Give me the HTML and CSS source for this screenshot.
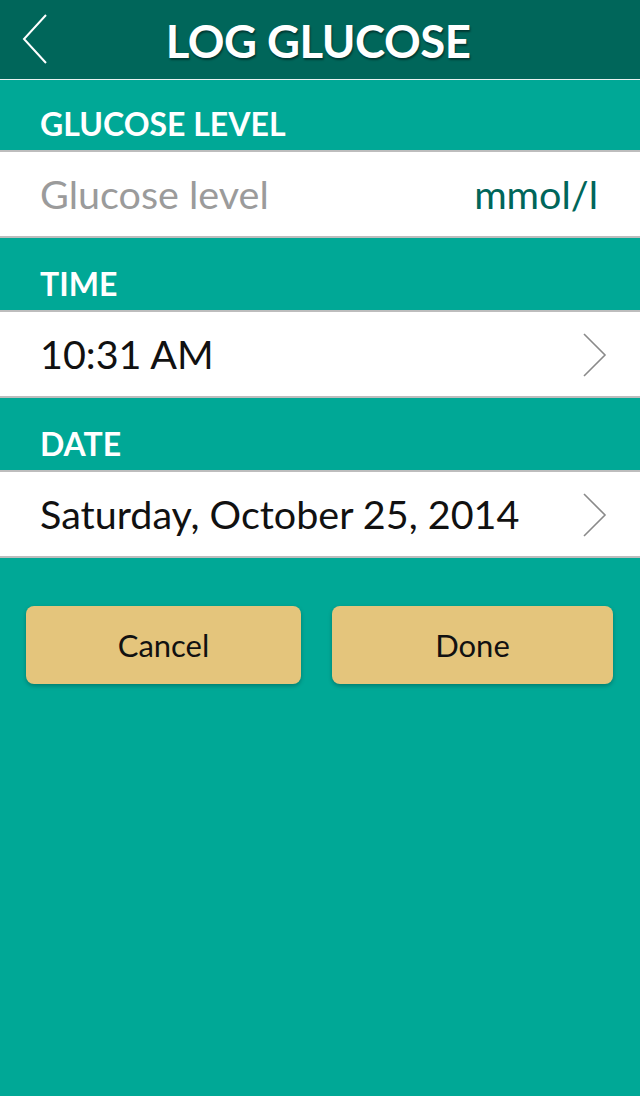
FILE: index.html
```html
<!DOCTYPE html>
<html>
<head>
<meta charset="utf-8">
<link rel="stylesheet" href="styles.css">
</head>
<body>
<div class="app">
  <header class="topbar">
    <svg class="back" width="30" height="52" viewBox="0 0 30 52"><polyline points="26,2 4,26 26,50" fill="none" stroke="#fff" stroke-width="2"/></svg>
    <h1 class="title">LOG GLUCOSE</h1>
  </header>
  <div class="section-head first">GLUCOSE LEVEL</div>
  <div class="row">
    <span class="placeholder">Glucose level</span>
    <span class="unit">mmol/l</span>
  </div>
  <div class="section-head">TIME</div>
  <div class="row">
    <span class="value">10:31 AM</span>
    <svg class="chev" width="26" height="44" viewBox="0 0 26 44"><polyline points="2,1 23,22 2,43" fill="none" stroke="#8a8a8a" stroke-width="1.6"/></svg>
  </div>
  <div class="section-head">DATE</div>
  <div class="row">
    <span class="value">Saturday, October 25, 2014</span>
    <svg class="chev" width="26" height="44" viewBox="0 0 26 44"><polyline points="2,1 23,22 2,43" fill="none" stroke="#8a8a8a" stroke-width="1.6"/></svg>
  </div>
  <div class="actions">
    <button class="btn btn-cancel">Cancel</button>
    <button class="btn btn-done">Done</button>
  </div>
</div>
</body>
</html>
```
FILE: styles.css
```css
html, body {
  margin: 0;
  padding: 0;
  background: #00a896;
}
body {
  font-family: Lato, "Open Sans", sans-serif;
}
.app {
  width: 640px;
  height: 1096px;
  background: #00a896;
}
.topbar {
  height: 79px;
  background: #00665a;
  border-bottom: 1px solid #e8f3f1;
  position: relative;
  display: flex;
  align-items: center;
  justify-content: center;
}
.back {
  position: absolute;
  left: 20px;
  top: 13px;
}
.title {
  margin: 0;
  color: #fff;
  font-size: 45.5px;
  font-weight: 700;
  letter-spacing: -0.5px;
  text-shadow: 1px 2px 2px rgba(0,0,0,0.45);
  padding-right: 4px;
  padding-top: 2px;
}
.section-head {
  height: 74px;
  box-sizing: border-box;
  padding: 26px 40px 0;
  color: #fff;
  font-weight: 700;
  font-size: 32px;
  line-height: 40px;
  border-bottom: 2px solid #bdbdbd;
}
.section-head.first {
  height: 72px;
  padding-top: 24px;
}
.row {
  height: 84px;
  background: #fff;
  border-bottom: 2px solid #bdbdbd;
  display: flex;
  align-items: center;
  justify-content: space-between;
  padding: 0 32px 0 40px;
  font-size: 39.5px;
}
.placeholder {
  color: #9b9b9b;
  padding-bottom: 2px;
}
.unit {
  color: #00665a;
  padding-right: 10px;
  padding-bottom: 2px;
}
.value {
  color: #111;
  padding-bottom: 2px;
}
.chev {
  margin-top: 2px;
}
.actions {
  display: flex;
  padding: 48px 27px 0 26px;
  gap: 31px;
}
.btn {
  height: 78px;
  border: none;
  border-radius: 8px;
  background: #e4c57c;
  box-shadow: 0 2px 4px rgba(0,0,0,0.25);
  font-family: Lato, "Open Sans", sans-serif;
  font-size: 31px;
  color: #111;
  padding: 0;
}
.btn-cancel { width: 275px; }
.btn-done { width: 281px; }
```
